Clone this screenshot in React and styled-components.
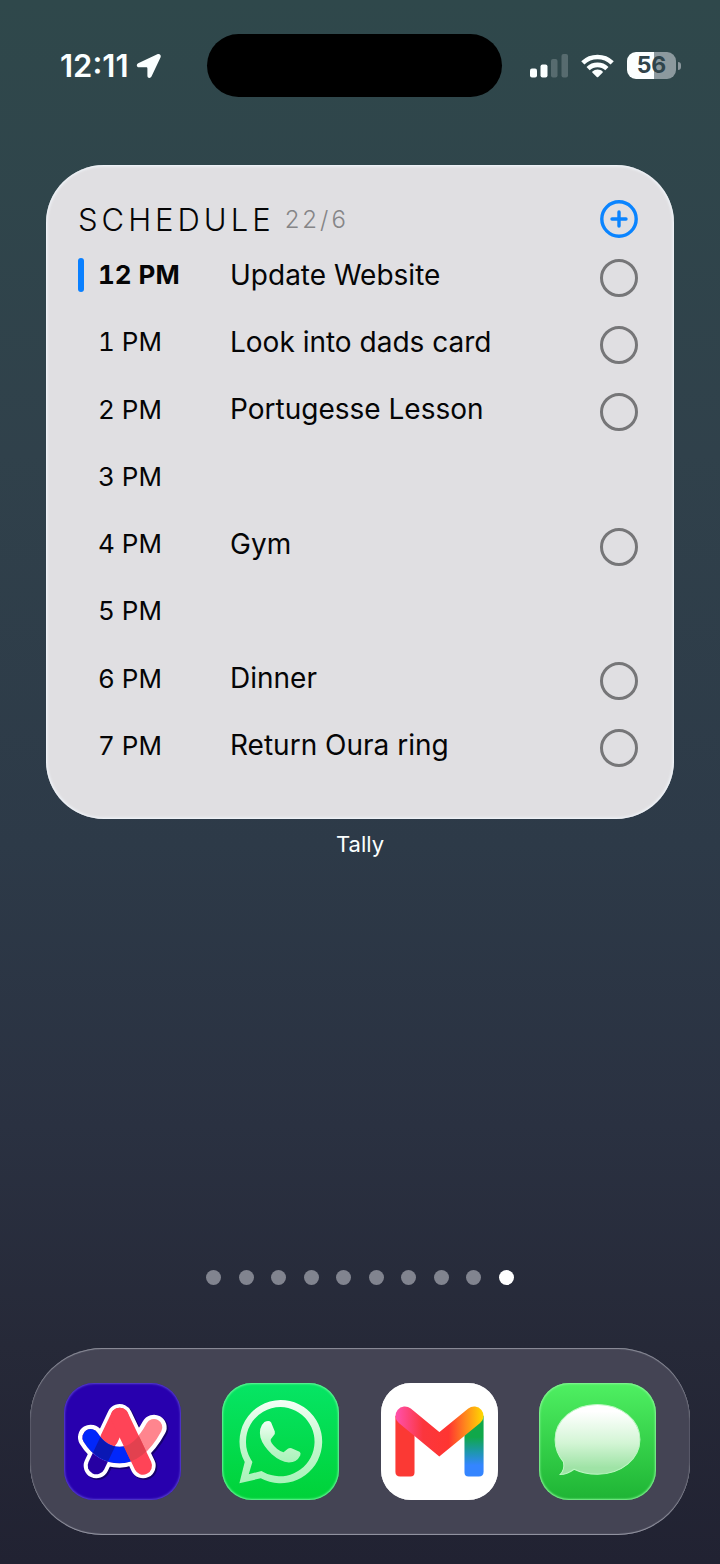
import React, { useState } from 'react';
import styled, { createGlobalStyle } from 'styled-components';

const GlobalStyle = createGlobalStyle`
  * {
    box-sizing: border-box;
  }

  body {
    margin: 0;
    background-color: #222333;
    font-family: Inter, 'Liberation Sans', sans-serif;
  }

  button {
    font: inherit;
    border: none;
    padding: 0;
    cursor: pointer;
  }
`;

const Screen = styled.div`
  min-height: 100vh;
  display: flex;
  flex-direction: column;
  padding: 34px 0 29px;
  background: linear-gradient(#2f484b 0%, #30414b 29%, #2d3a48 54%, #2a3141 72%, #262938 86%, #212232 100%);
`;

const StatusBar = styled.header`
  display: grid;
  grid-template-columns: 1fr 295px 1fr;
  align-items: center;
  padding-right: 11px;
  color: #fbffff;
`;

const Clock = styled.div`
  display: flex;
  align-items: center;
  gap: 7px;
  padding-left: 60px;
  font-size: 31px;
  line-height: 36px;
  font-weight: 600;
`;

const Island = styled.div`
  height: 63px;
  border-radius: 32px;
  background-color: #000000;
`;

const Signals = styled.div`
  display: flex;
  align-items: center;
  gap: 13px;
  padding-left: 28px;
`;

const Battery = styled.div`
  display: flex;
  align-items: center;
  gap: 2px;

  &::after {
    content: '';
    width: 3px;
    height: 8px;
    border-radius: 0 4px 4px 0;
    background-color: #8a969c;
  }
`;

const BatteryLevel = styled.div`
  width: 49px;
  height: 27px;
  border-radius: 9px;
  background: linear-gradient(to right, #fbffff 56%, #8c999e 56%);
  color: #2f444b;
  font-size: 23px;
  line-height: 27px;
  font-weight: 700;
  text-align: center;
`;

const Widget = styled.section`
  margin: 68px 46px 0;
  padding: 35px 36px 40px 32px;
  border-radius: 58px;
  background-color: #e0dfe2;
  box-shadow: inset 0 0 3px 1px #f4f9ff;
  color: #050506;
`;

const WidgetHeader = styled.div`
  display: flex;
  align-items: center;
  height: 38px;
`;

const WidgetTitle = styled.h1`
  margin: 0;
  font-size: 31px;
  font-weight: 300;
  letter-spacing: 4px;
`;

const WidgetDate = styled.span`
  flex: 1;
  margin-left: 10px;
  color: #858587;
  font-size: 24px;
  font-weight: 300;
  letter-spacing: 3px;
`;

const AddButton = styled.button`
  width: 38px;
  height: 38px;
  background: none;
  color: #0a84ff;

  svg {
    display: block;
  }
`;

const HourList = styled.ul`
  display: grid;
  grid-auto-rows: 1fr;
  height: 538px;
  margin: 3px 0 0;
  padding: 0;
  list-style: none;
`;

const HourRow = styled.li`
  display: grid;
  grid-template-columns: 6px 118px 1fr 38px;
  column-gap: 14px;
  align-items: center;
`;

const NowMarker = styled.span`
  height: 34px;
  border-radius: 3px;
  background-color: ${(props) => (props.$active ? '#0a80ff' : 'transparent')};
`;

const Hour = styled.span`
  font-size: 26px;
  font-weight: ${(props) => (props.$active ? 700 : 400)};
  font-variant-numeric: tabular-nums;
`;

const TaskLabel = styled.label`
  font-size: 28px;
  white-space: nowrap;
`;

const TaskCheck = styled.input`
  appearance: none;
  width: 38px;
  height: 38px;
  margin: 6px 0 0;
  border: 3px solid #767678;
  border-radius: 50%;
  cursor: pointer;

  &:checked {
    background-color: #0a84ff;
    border-color: #0a84ff;
  }
`;

const WidgetName = styled.div`
  margin-top: 12px;
  color: #fbffff;
  font-size: 22px;
  line-height: 26px;
  text-align: center;
`;

const Pages = styled.nav`
  display: flex;
  justify-content: space-between;
  width: 308px;
  margin: auto auto 63px;
`;

const PageDot = styled.button`
  width: 15px;
  height: 15px;
  border-radius: 50%;
  background-color: ${(props) => (props.$active ? '#ffffff' : '#81848f')};
`;

const Dock = styled.footer`
  display: flex;
  justify-content: space-between;
  margin: 0 30px;
  padding: 35px 34px;
  border-radius: 72px;
  background-color: #444454;
  box-shadow: inset 0 1px 1px #8f919d, inset 0 -1px 1px #9a9ba8, inset 0 0 2px #62636f;
`;

const AppIcon = styled.button`
  width: 117px;
  height: 117px;
  border-radius: 30px;
  overflow: hidden;
  background: ${(props) => props.$fill};
  box-shadow: inset 0 0 2px 1px ${(props) => props.$rim};

  svg {
    display: block;
    width: 100%;
    height: 100%;
  }
`;

const hours = [
  { time: '12 PM', task: 'Update Website', now: true },
  { time: '1 PM', task: 'Look into dads card' },
  { time: '2 PM', task: 'Portugesse Lesson' },
  { time: '3 PM' },
  { time: '4 PM', task: 'Gym' },
  { time: '5 PM' },
  { time: '6 PM', task: 'Dinner' },
  { time: '7 PM', task: 'Return Oura ring' },
];

const LocationArrow = () => (
  <svg width="26" height="26" viewBox="0 0 26 26" fill="currentColor" aria-hidden="true">
    <path d="M21.3 1.3 2.2 10.2C.2 11.2.4 14.3 2.9 14.3h7.4c.7 0 1.100.4 1.100 1.100v7.300c0 2.500 3 3 4.100.8L24.600 4.200c.9-2-1.200-3.900-3.300-2.900Z" />
  </svg>
);

const CellBars = () => (
  <svg width="38" height="24" viewBox="0 0 38 24" fill="currentColor" aria-hidden="true">
    <rect x="0" y="14.5" width="7" height="9" rx="2" />
    <rect x="10.5" y="10.5" width="7" height="13" rx="2" />
    <rect x="21" y="5" width="6.5" height="18.5" rx="2" opacity=".2" />
    <rect x="31.5" y="0" width="6.5" height="23.5" rx="2" opacity=".2" />
  </svg>
);

const WifiIcon = () => (
  <svg width="33" height="24" viewBox="0 0 33 24" aria-hidden="true">
    <g fill="none" stroke="currentColor" strokeWidth="4.6">
      <path d="M1.8 8.800a21.400 21.400 0 0 1 29.400 0" />
      <path d="M7.100 14.600a13.600 13.600 0 0 1 18.800 0" />
    </g>
    <path d="M16.5 15.6c2 0 3.7.7 5.1 1.8.4.3.4.7.1 1l-4.5 4.5c-.4.4-1 .4-1.4 0l-4.5-4.5c-.3-.3-.3-.7.1-1a8 8 0 0 1 5.1-1.8Z" fill="currentColor" />
  </svg>
);

const PlusIcon = () => (
  <svg width="38" height="38" viewBox="0 0 38 38" fill="none" stroke="currentColor" strokeWidth="3.4" aria-hidden="true">
    <circle cx="19" cy="19" r="17.2" />
    <path d="M19 12v14M12 19h14" strokeLinecap="round" />
  </svg>
);

const smile = 'M125 202Q158 255 212 255Q270 255 315 172';

const ArcIcon = () => (
  <svg viewBox="45 39 351 351" fill="none" strokeLinecap="round" strokeLinejoin="round" aria-hidden="true">
    <defs>
      <mask id="arc-smile" maskUnits="userSpaceOnUse" x="45" y="39" width="351" height="351">
        <path d={smile} stroke="#ffffff" strokeWidth="48" />
      </mask>
    </defs>
    <g stroke="#16006e" strokeWidth="78" transform="translate(4 4)">
      <path d="M142 287 212 140 282 287" />
      <path d={smile} />
    </g>
    <g stroke="#ffffff" strokeWidth="76">
      <path d="M142 287 212 140 282 287" />
      <path d={smile} />
    </g>
    <path d="M142 287 166 237" stroke="#2600a2" strokeWidth="52" />
    <path d="M212 140 180 207" stroke="#ff4457" strokeWidth="54" />
    <path d={smile} stroke="#ff858e" strokeWidth="50" />
    <path d="M125 202Q158 255 212 255Q235 255 252 245" stroke="#0127fb" strokeWidth="50" />
    <g mask="url(#arc-smile)">
      <path d="M142 287 184 199" stroke="#0a18b4" strokeWidth="52" strokeLinecap="butt" />
    </g>
    <path d="M212 140 282 287" stroke="#ff4457" strokeWidth="54" />
    <g mask="url(#arc-smile)">
      <path d="M242 203 276 275" stroke="#e2414f" strokeWidth="54" strokeLinecap="butt" />
    </g>
  </svg>
);

const WhatsAppIcon = () => (
  <svg viewBox="38 39 350 350" aria-hidden="true">
    <defs>
      <linearGradient id="wa-glass" x1="0" y1="0" x2="0" y2="1">
        <stop offset="0" stopColor="#f4fff6" />
        <stop offset=".5" stopColor="#c5f7cf" />
        <stop offset="1" stopColor="#a9f3ba" />
      </linearGradient>
    </defs>
    <path
      fill="url(#wa-glass)"
      fillRule="evenodd"
      d="M213 90A124.500 124.500 0 1 1 154 324L90 339 106 275A124.500 124.500 0 0 1 213 90ZM213 111A103.500 103.500 0 0 0 124 267L129 275 118 312 156 302 163 306A103.500 103.500 0 1 0 213 111Z"
    />
    <path
      fill="url(#wa-glass)"
      d="M165 156Q179 149 185 157L196 184Q198 190 192 197L184 207Q182 212 187 219Q202 240 222 246L235 236Q240 232 246 234L270 245Q275 248 272 256Q262 277 238 277Q212 274 187 252Q160 226 153 202Q147 172 165 156Z"
    />
  </svg>
);

const GmailIcon = () => (
  <svg viewBox="36 39 349 349" fill="none" strokeLinecap="round" aria-hidden="true">
    <defs>
      <linearGradient id="gm-right" gradientUnits="userSpaceOnUse" x1="0" y1="150" x2="0" y2="318">
        <stop offset=".3" stopColor="#10a84a" />
        <stop offset=".55" stopColor="#1c98a8" />
        <stop offset=".8" stopColor="#3485ff" />
      </linearGradient>
      <linearGradient id="gm-fold" gradientUnits="userSpaceOnUse" x1="85" y1="0" x2="340" y2="0">
        <stop offset="0" stopColor="#ff4fa6" />
        <stop offset=".3" stopColor="#fb363d" />
        <stop offset=".6" stopColor="#ff3531" />
        <stop offset=".8" stopColor="#ff8a1c" />
        <stop offset="1" stopColor="#ffd800" />
      </linearGradient>
    </defs>
    <path d="M79 137H136V306Q136 318 124 318H93Q79 318 79 304Z" fill="#fb3934" />
    <path d="M285 137H342V304Q342 318 328 318H297Q285 318 285 306Z" fill="url(#gm-right)" />
    <path d="M107 137 210 222 314 137" stroke="url(#gm-fold)" strokeWidth="56" />
  </svg>
);

const MessagesIcon = () => (
  <svg viewBox="45 39 350 350" aria-hidden="true">
    <defs>
      <linearGradient id="msg-bubble" x1="0" y1="0" x2="0" y2="1">
        <stop offset=".1" stopColor="#ffffff" />
        <stop offset=".55" stopColor="#d3f5d5" />
        <stop offset=".9" stopColor="#9fe3a6" />
      </linearGradient>
    </defs>
    <path
      fill="url(#msg-bubble)"
      stroke="#bdf7c3"
      strokeWidth="3"
      d="M220 103C291 103 347 150 347 208S291 312 220 312C194 312 170 307 150 297C138 306 124 313 108 313C117 304 121 289 118 275C102 256 93 233 93 208C93 150 149 103 220 103Z"
    />
  </svg>
);

const apps = [
  { name: 'Arc', icon: ArcIcon, fill: '#2800ae', rim: '#5a43cf' },
  { name: 'WhatsApp', icon: WhatsAppIcon, fill: 'linear-gradient(#06e565, #00d238)', rim: '#6df59b' },
  { name: 'Gmail', icon: GmailIcon, fill: '#ffffff', rim: '#ffffff' },
  { name: 'Messages', icon: MessagesIcon, fill: 'linear-gradient(#4ff062, #1eb434)', rim: '#8af598' },
];

const ScheduleRow = ({ item }) => {
  const [done, setDone] = useState(false);
  const id = `task-${item.time.replace(' ', '-')}`;

  return (
    <HourRow>
      <NowMarker $active={item.now} />
      <Hour $active={item.now}>{item.time}</Hour>
      {item.task && <TaskLabel htmlFor={id}>{item.task}</TaskLabel>}
      {item.task && (
        <TaskCheck type="checkbox" id={id} checked={done} onChange={() => setDone(!done)} />
      )}
    </HourRow>
  );
};

const App = () => {
  const [page, setPage] = useState(9);

  return (
    <>
      <GlobalStyle />
      <Screen>
        <StatusBar>
          <Clock>
            12:11
            <LocationArrow />
          </Clock>
          <Island />
          <Signals>
            <CellBars />
            <WifiIcon />
            <Battery>
              <BatteryLevel>56</BatteryLevel>
            </Battery>
          </Signals>
        </StatusBar>

        <Widget>
          <WidgetHeader>
            <WidgetTitle>SCHEDULE</WidgetTitle>
            <WidgetDate>22/6</WidgetDate>
            <AddButton aria-label="Add task">
              <PlusIcon />
            </AddButton>
          </WidgetHeader>
          <HourList>
            {hours.map((item) => (
              <ScheduleRow key={item.time} item={item} />
            ))}
          </HourList>
        </Widget>
        <WidgetName>Tally</WidgetName>

        <Pages>
          {Array.from({ length: 10 }, (_, i) => (
            <PageDot key={i} aria-label={`Page ${i + 1}`} $active={i === page} onClick={() => setPage(i)} />
          ))}
        </Pages>

        <Dock>
          {apps.map(({ name, icon: Icon, fill, rim }) => (
            <AppIcon key={name} aria-label={name} $fill={fill} $rim={rim}>
              <Icon />
            </AppIcon>
          ))}
        </Dock>
      </Screen>
    </>
  );
};

export default App;
